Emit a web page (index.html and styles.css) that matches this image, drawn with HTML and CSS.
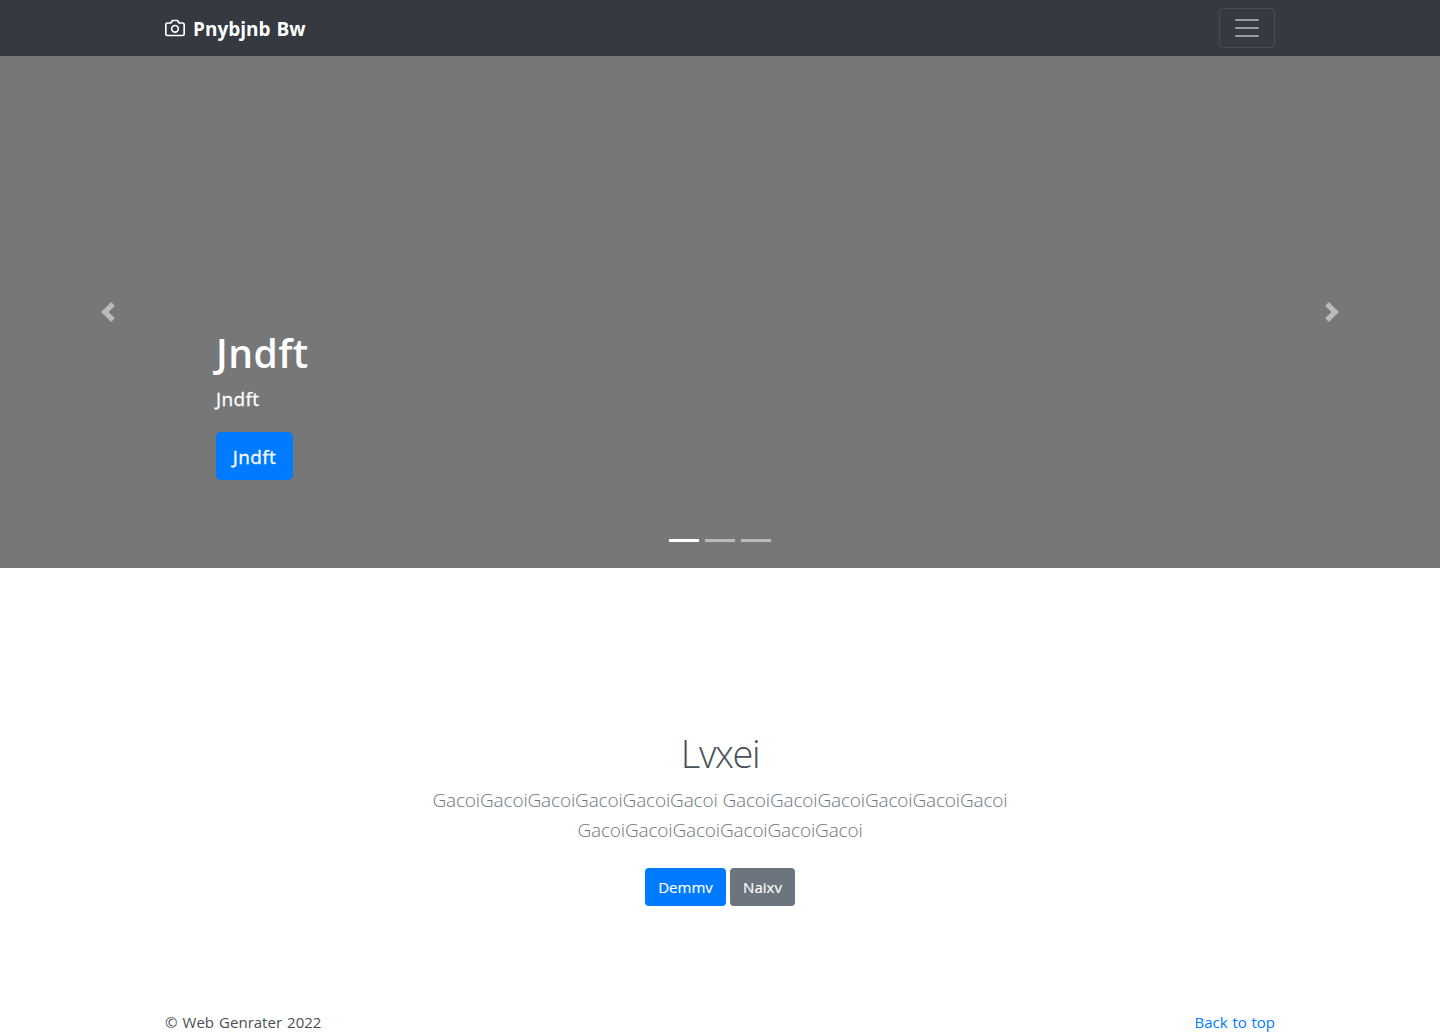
FILE: index.html
```html
<!DOCTYPE html>
<html lang="en">
<head>
<meta charset="utf-8">
<title>Pnybjnb Bw</title>
<link rel="stylesheet" href="styles.css">
</head>
<body>
<header class="navbar">
  <div class="container bar">
    <a class="brand" href="#">
      <svg class="camera" width="20" height="20" viewBox="0 0 24 24" fill="none" stroke="currentColor" stroke-width="2" stroke-linecap="round" stroke-linejoin="round"><path d="M23 19a2 2 0 0 1-2 2H3a2 2 0 0 1-2-2V8a2 2 0 0 1 2-2h4l2-3h6l2 3h4a2 2 0 0 1 2 2z"/><circle cx="12" cy="13" r="4"/></svg>
      <strong class="brand-name">Pnybjnb Bw</strong>
    </a>
    <button class="toggler" aria-label="Menu">
      <svg width="30" height="30" viewBox="0 0 30 30" stroke="rgba(255,255,255,.5)" stroke-width="2" stroke-linecap="round"><path d="M4 7h22M4 15h22M4 23h22"/></svg>
    </button>
  </div>
</header>
<main>
  <section class="carousel">
    <a class="control" href="#" aria-label="Previous"><svg width="20" height="20" viewBox="0 0 8 8" fill="#fff"><path d="M5.25 0l-4 4 4 4 1.5-1.5L4.25 4l2.5-2.5L5.25 0z"/></svg></a>
    <div class="slide">
      <div class="caption">
        <h1 class="caption-title">Jndft</h1>
        <p class="caption-text">Jndft</p>
        <a class="btn btn-large" href="#">Jndft</a>
      </div>
      <div class="indicators"><span class="dash active"></span><span class="dash"></span><span class="dash"></span></div>
    </div>
    <a class="control" href="#" aria-label="Next"><svg width="20" height="20" viewBox="0 0 8 8" fill="#fff"><path d="M2.75 0l-1.5 1.5L3.75 4l-2.5 2.5L2.75 8l4-4-4-4z"/></svg></a>
  </section>
  <section class="intro">
    <h1 class="intro-title">Lvxei</h1>
    <p class="intro-text">GacoiGacoiGacoiGacoiGacoiGacoi GacoiGacoiGacoiGacoiGacoiGacoi<br>GacoiGacoiGacoiGacoiGacoiGacoi</p>
    <div class="actions"><a class="btn btn-demo" href="#">Demmv</a><a class="btn btn-secondary" href="#">Naixv</a></div>
  </section>
</main>
<footer class="container footer">
  <span class="copyright">© Web Genrater 2022</span>
  <a class="top-link" href="#">Back to top</a>
</footer>
</body>
</html>
```
FILE: styles.css
```css
* { box-sizing: border-box; }
body { margin: 0; height: 1034px; overflow: hidden; background: #fff; color: #212529; font: 400 16px/24px "Open Sans", "Noto Sans", sans-serif; }
h1, p { margin: 0; }
a { text-decoration: none; color: #007bff; }
svg { display: block; }
.container { width: 1140px; margin: 0 auto; padding: 0 15px; }
.navbar { height: 56px; background: #343a40; }
.bar { height: 56px; display: flex; align-items: center; justify-content: space-between; }
.brand { display: flex; align-items: center; gap: 8px; color: #fff; font-size: 20px; line-height: 30px; }
.brand-name { padding-top: 2px; font-size: 19px; font-weight: 700; letter-spacing: 0; word-spacing: 1px; }
.toggler { width: 56px; height: 40px; padding: 0; display: flex; align-items: center; justify-content: center; background: none; border: 1px solid rgba(255,255,255,.1); border-radius: 4px; }
.carousel { height: 512px; display: flex; background: #777; }
.control { width: 216px; display: flex; align-items: center; justify-content: center; opacity: .5; }
.slide { flex: 1; display: flex; flex-direction: column; justify-content: flex-end; color: #fff; }
.caption-title { font-size: 39px; line-height: 48px; font-weight: 600; letter-spacing: .5px; margin-bottom: 7px; }
.caption-text { font-size: 19px; line-height: 30px; margin-bottom: 18px; letter-spacing: .4px; -webkit-text-stroke: .3px; }
.btn { display: inline-flex; align-items: center; justify-content: center; height: 38px; border-radius: 4px; background: #007bff; color: #fff; font-size: 15px; -webkit-text-stroke: .15px; }
.btn-large { width: 77px; height: 48px; padding-top: 1px; border-radius: 5px; font-size: 19px; letter-spacing: .4px; -webkit-text-stroke: .3px; }
.indicators { display: flex; justify-content: center; gap: 6px; padding: 59px 0 26px; }
.dash { width: 30px; height: 3px; background: #fff; opacity: .5; }
.active { opacity: 1; }
.intro { height: 442px; padding-top: 161px; text-align: center; }
.intro-title { font-size: 38px; line-height: 48px; font-weight: 300; letter-spacing: -1.4px; color: #495057; margin-bottom: 8px; }
.intro-text { font-size: 19px; line-height: 30px; font-weight: 300; letter-spacing: -.15px; color: #6c757d; margin-bottom: 23px; }
.actions { display: flex; justify-content: center; gap: 4px; }
.btn-demo { width: 81px; }
.btn-secondary { width: 65px; background: #6c757d; }
.footer { display: flex; justify-content: space-between; font-size: 15px; color: #495057; }
.copyright { word-spacing: 1.2px; }
.top-link { word-spacing: .8px; }
```
